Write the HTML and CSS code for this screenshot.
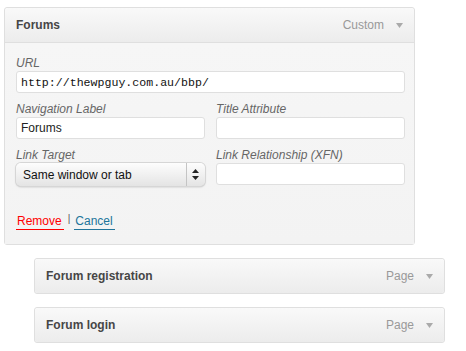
FILE: index.html
```html
<!DOCTYPE html>
<html lang="en">
<head>
<meta charset="UTF-8">
<title>Menu items</title>
<link rel="stylesheet" href="styles.css">
</head>
<body>

<ul class="menu">
  <li class="menu-item open">
    <div class="item-bar">
      <span class="item-title">Forums</span>
      <span class="item-type">Custom</span>
      <svg class="item-arrow" width="7" height="5" viewBox="0 0 7 5"><polygon points="0,0 7,0 3.5,5" /></svg>
    </div>
    <div class="item-settings">
      <div class="field wide">
        <label>URL</label>
        <input type="text" class="code" value="http://thewpguy.com.au/bbp/">
      </div>
      <div class="field">
        <label>Navigation Label</label>
        <input type="text" value="Forums">
      </div>
      <div class="field">
        <label>Title Attribute</label>
        <input type="text" value="">
      </div>
      <div class="field">
        <label>Link Target</label>
        <div class="select-wrap">
          <select>
            <option>Same window or tab</option>
            <option>New window or tab</option>
          </select>
          <svg class="select-arrows" width="7" height="11" viewBox="0 0 7 11"><polygon points="3.5,0 7,4 0,4" /><polygon points="0,7 7,7 3.5,11" /></svg>
        </div>
      </div>
      <div class="field">
        <label>Link Relationship (XFN)</label>
        <input type="text" value="">
      </div>
      <div class="actions">
        <a href="#" class="delete">Remove</a>
        <span class="sep">|</span>
        <a href="#" class="cancel">Cancel</a>
      </div>
    </div>
  </li>

  <li class="menu-item sub">
    <div class="item-bar">
      <span class="item-title">Forum registration</span>
      <span class="item-type">Page</span>
      <svg class="item-arrow" width="7" height="5" viewBox="0 0 7 5"><polygon points="0,0 7,0 3.5,5" /></svg>
    </div>
  </li>

  <li class="menu-item sub">
    <div class="item-bar">
      <span class="item-title">Forum login</span>
      <span class="item-type">Page</span>
      <svg class="item-arrow" width="7" height="5" viewBox="0 0 7 5"><polygon points="0,0 7,0 3.5,5" /></svg>
    </div>
  </li>
</ul>

</body>
</html>
```

FILE: styles.css
```css
body {margin:0; background:#fff; font-family:"Liberation Sans", Arial, sans-serif; font-size:12px; color:#333;}
.menu {list-style:none; margin:0; padding:7px 0 0 4px;}
.menu-item {box-sizing:border-box; width:411px; border:1px solid #dfdfdf; border-radius:3px; background:#f5f5f5; margin-bottom:13px; box-shadow:inset 0 1px 0 #fff;}
.menu-item.sub {margin-left:30px;}

.item-bar {display:flex; align-items:center; height:34px; padding:0 11px 0 11px; background:linear-gradient(#f9f9f9, #ececec); border-radius:3px;}
.open .item-bar {border-bottom:1px solid #dfdfdf; border-radius:3px 3px 0 0;}
.item-title {flex:1; font-weight:bold; color:#464646;}
.item-type {color:#999;}
.item-arrow {margin-left:12px; fill:#aaa;}

.item-settings {display:grid; grid-template-columns:1fr 1fr; column-gap:11px; row-gap:8px; padding:12px 9px 14px 11px; background:linear-gradient(#f6f6f6, #f3f3f3);}
.field.wide {grid-column:1 / 3;}
.field label {display:block; font-style:italic; color:#666; line-height:16px;}
.field input {display:block; box-sizing:border-box; width:100%; height:22px; margin:0; padding:0 4px; border:1px solid #dfdfdf; border-radius:3px; background:#fff; font-family:"Liberation Sans", Arial, sans-serif; font-size:12px; color:#222;}
.field input.code {font-family:"Liberation Mono", "Courier New", monospace; font-size:11.6px; color:#111;}

.select-wrap {position:relative; height:23px;}
.select-wrap select {-webkit-appearance:none; appearance:none; display:block; box-sizing:border-box; width:100%; height:23px; margin:0; padding:0 0 0 7px; border:none; border-radius:5px; background:linear-gradient(#fdfdfd, #e4e4e4); box-shadow:0 0 0 1px #d6d6d6, 0 1px 2px rgba(0,0,0,0.25); font-family:"Liberation Sans", Arial, sans-serif; font-size:12px; color:#111;}
.select-wrap::after {content:""; position:absolute; top:0; bottom:0; right:18px; border-left:1px solid #c4c4c4;}
.select-arrows {position:absolute; right:6px; top:6px; fill:#222;}

.actions {grid-column:1 / 3; margin-top:19px; display:flex; align-items:flex-start; line-height:16px;}
.actions a {text-decoration:none; padding:0 2px 0 1px; border-bottom:1px solid;}
.delete {color:#f00;}
.cancel {color:#21759b;}
.sep {color:#555; font-size:10px; line-height:12px; margin:0 4px 0 4px;}
```
